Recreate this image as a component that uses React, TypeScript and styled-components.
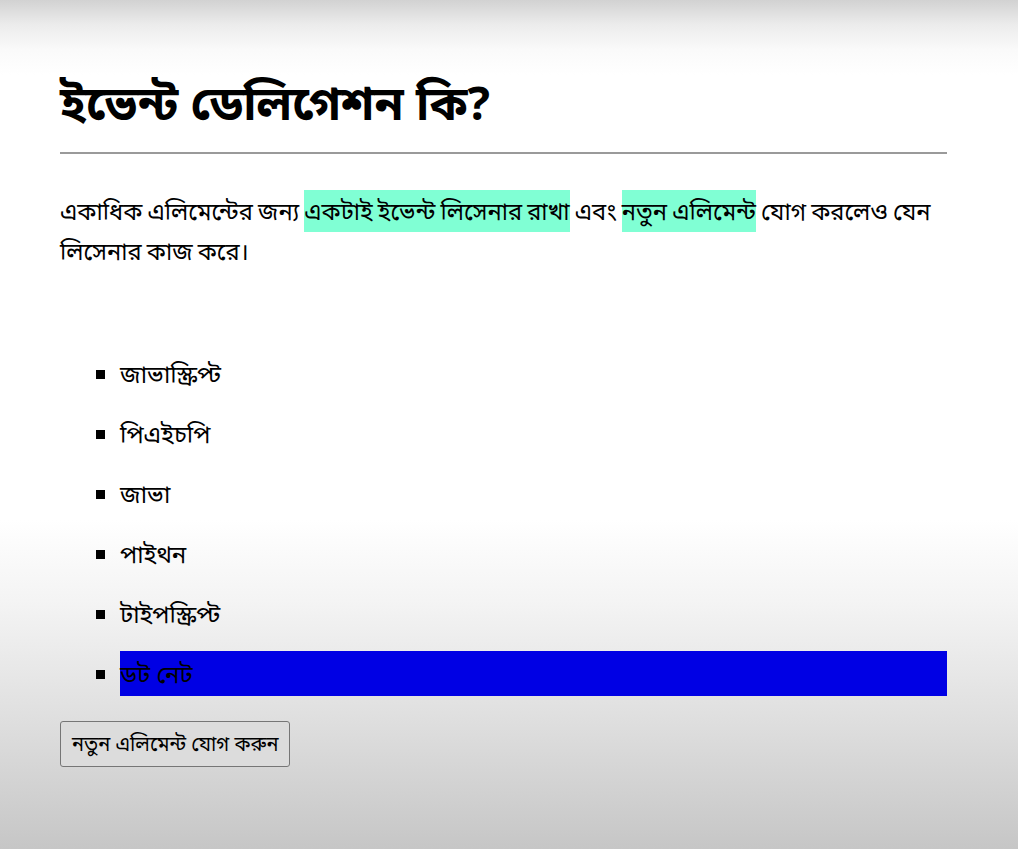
import React from "react";
import styled, { createGlobalStyle } from "styled-components";

const Global = createGlobalStyle`
  html, body {
    margin: 0;
    padding: 0;
    height: 849px;
    overflow: hidden;
  }
  body {
    font-family: "Noto Sans", "Noto Sans Bengali", sans-serif;
    color: #000;
    background: linear-gradient(
      to bottom,
      #d2d2d2 0px,
      #ececec 25px,
      #fafafa 50px,
      #ffffff 75px,
      #ffffff 520px,
      #f4f4f4 600px,
      #e6e6e6 680px,
      #d9d9d9 750px,
      #c6c6c6 849px
    );
  }
`;

const Page = styled.main`
  width: 887px;
  padding: 72px 0 0 60px;
  display: flex;
  flex-direction: column;
`;

const Title = styled.h1`
  margin: 0;
  font-size: 47px;
  font-weight: 700;
  line-height: 60px;
`;

const Rule = styled.hr`
  margin: 20px 0 0;
  border: 0;
  height: 2px;
  background: #9a9a9a;
`;

const Lead = styled.p`
  margin: 37px 0 0;
  font-size: 23.7px;
  line-height: 40px;
  word-spacing: -1px;
`;

const Mark = styled.span`
  background: #80ffd4;
  padding: 5px 0;
`;

const List = styled.ul`
  margin: 80px 0 0;
  padding: 0 0 0 60px;
  list-style: square;
  display: flex;
  flex-direction: column;
  gap: 15px;
`;

const Item = styled.li<{ $active?: boolean }>`
  font-size: 24px;
  line-height: 45px;
  background: ${(p) => (p.$active ? "#0000e4" : "transparent")};
`;

const AddButton = styled.button`
  align-self: flex-start;
  margin-top: 25px;
  height: 46px;
  padding: 0 11px;
  font-family: "Noto Sans", "Noto Sans Bengali", sans-serif;
  font-size: 20px;
  color: #000;
  background: #dcdcdc;
  border: 1px solid #767676;
  border-radius: 3px;
`;

const items = ["জাভাস্ক্রিপ্ট", "পিএইচপি", "জাভা", "পাইথন", "টাইপস্ক্রিপ্ট", "ডট নেট"];

export default function App() {
  return (
    <>
      <Global />
      <Page>
        <Title>ইভেন্ট ডেলিগেশন কি?</Title>
        <Rule />
        <Lead>
          একাধিক এলিমেন্টের জন্য <Mark>একটাই ইভেন্ট লিসেনার রাখা</Mark> এবং{" "}
          <Mark>নতুন এলিমেন্ট</Mark> যোগ করলেও যেন লিসেনার কাজ করে।
        </Lead>
        <List>
          {items.map((t, i) => (
            <Item key={t} $active={i === items.length - 1}>
              {t}
            </Item>
          ))}
        </List>
        <AddButton>নতুন এলিমেন্ট যোগ করুন</AddButton>
      </Page>
    </>
  );
}
